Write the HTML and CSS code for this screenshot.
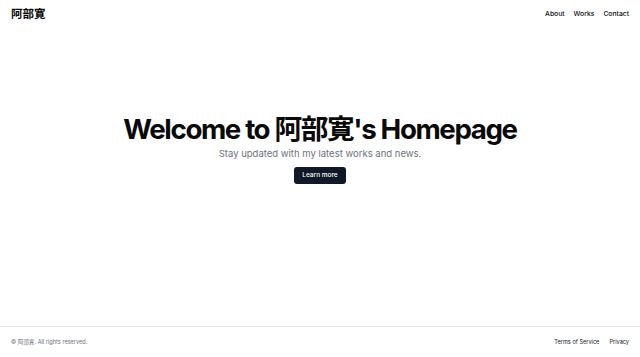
FILE: index.html
```html
<!DOCTYPE html>
<html lang="ja">
<head>
<meta charset="utf-8">
<title>阿部寛's Homepage</title>
<link rel="stylesheet" href="styles.css">
</head>
<body>
	<div class="page">
		<header class="top">
			<a class="logo" href="#">阿部寛</a>
			<nav class="nav">
				<a href="#">About</a>
				<a href="#">Works</a>
				<a href="#">Contact</a>
			</nav>
		</header>

		<main class="hero">
			<h1>Welcome to 阿部寛's Homepage</h1>
			<p>Stay updated with my latest works and news.</p>
			<a class="btn" href="#">Learn more</a>
		</main>

		<footer class="foot">
			<span>© 阿部寛. All rights reserved.</span>
			<nav class="foot-links">
				<a href="#">Terms of Service</a>
				<a href="#">Privacy</a>
			</nav>
		</footer>
	</div>
</body>
</html>
```

FILE: styles.css
```css
body{
	margin: 0;
	font-family: Inter, "Noto Sans CJK JP", sans-serif;
	color: #0a0a0a;
	background: #fff;
}

a{
	color: inherit;
	text-decoration: none;
}

.page{
	display: flex;
	flex-direction: column;
	min-height: 100vh;
}

.top{
	display: flex;
	align-items: center;
	justify-content: space-between;
	height: 26px;
	padding: 0 11px;
}

.logo{
	font-size: 11.5px;
	font-weight: 700;
}

.nav{
	display: flex;
	gap: 9px;
	font-size: 6.8px;
	font-weight: 500;
}

.hero{
	flex: 1;
	display: flex;
	flex-direction: column;
	align-items: center;
	justify-content: center;
	padding-bottom: 54px;
	text-align: center;
}

.hero h1{
	margin: 0;
	font-size: 27.7px;
	font-weight: 700;
	letter-spacing: -0.05em;
	line-height: 1.1;
}

.hero p{
	margin: 3px 0 8px;
	font-size: 9.5px;
	color: #6b7280;
}

.btn{
	display: inline-flex;
	align-items: center;
	height: 17px;
	padding: 0 8px;
	border-radius: 3px;
	background: #111827;
	color: #fff;
	font-size: 6.5px;
	font-weight: 500;
}

.foot{
	display: flex;
	align-items: center;
	justify-content: space-between;
	height: 30px;
	padding: 0 11px;
	border-top: 1px solid #e5e7eb;
	font-size: 5.6px;
	color: #6b7280;
}

.foot-links{
	display: flex;
	gap: 10px;
	color: #111827;
}
```
